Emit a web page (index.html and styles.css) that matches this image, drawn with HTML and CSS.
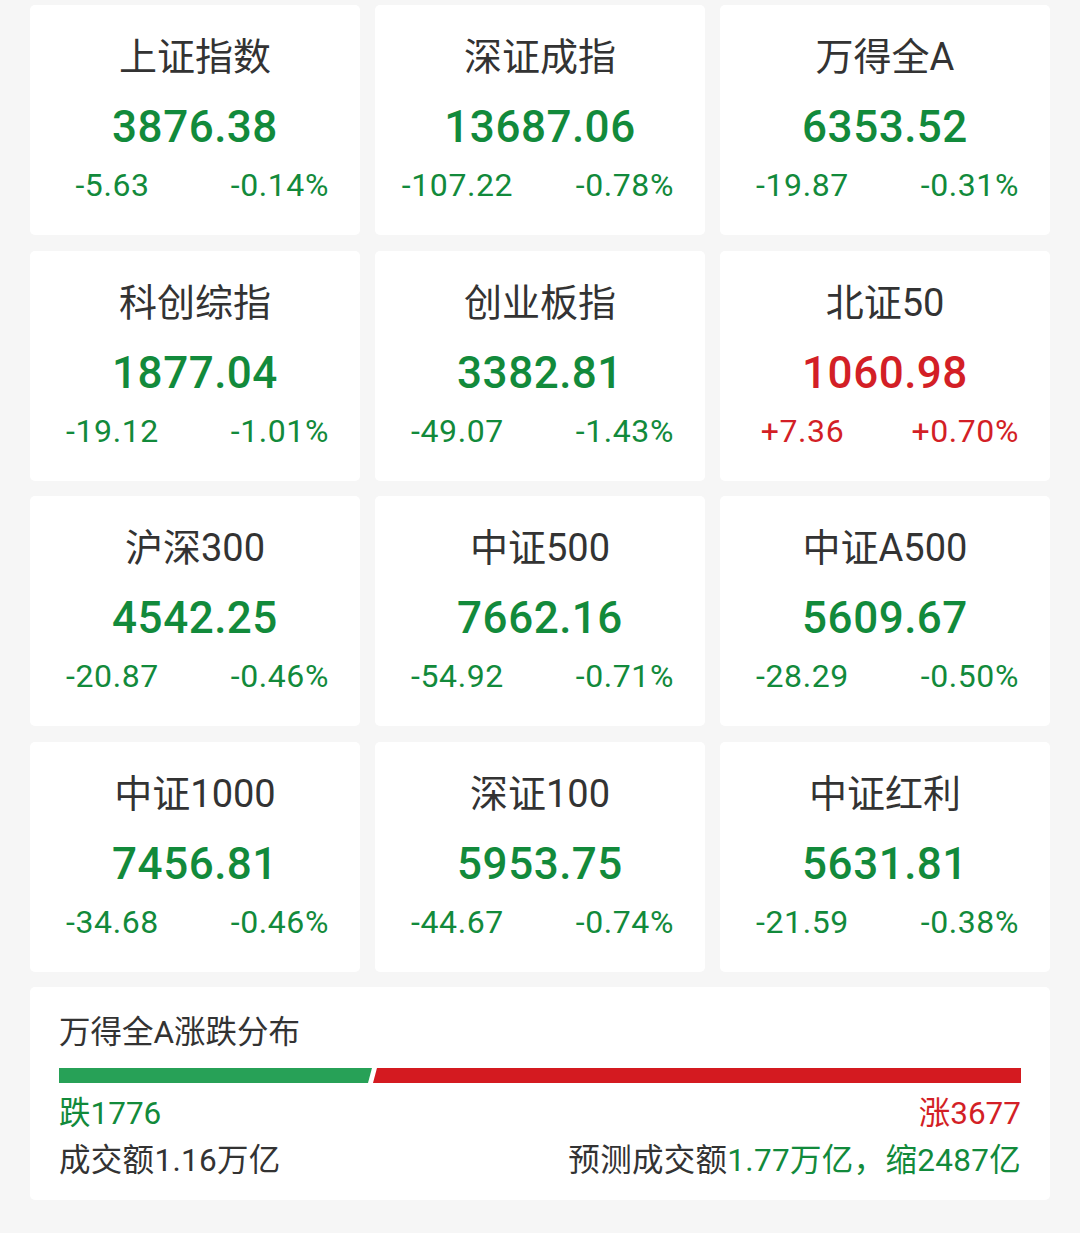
FILE: index.html
```html
<!DOCTYPE html>
<html lang="zh">
<head>
    <meta charset="UTF-8">
    <meta name="viewport" content="width=device-width, initial-scale=1.0">
    <title>指数行情</title>
    <link rel="stylesheet" href="styles.css">
</head>
<body>
    <div class="page">
        <div class="index-grid">
            <div class="card">
                <div class="name">上证指数</div>
                <div class="price down">3876.38</div>
                <div class="chg down"><span class="chg-val">-5.63</span><span class="chg-pct">-0.14%</span></div>
            </div>
            <div class="card">
                <div class="name">深证成指</div>
                <div class="price down">13687.06</div>
                <div class="chg down"><span class="chg-val">-107.22</span><span class="chg-pct">-0.78%</span></div>
            </div>
            <div class="card">
                <div class="name">万得全A</div>
                <div class="price down">6353.52</div>
                <div class="chg down"><span class="chg-val">-19.87</span><span class="chg-pct">-0.31%</span></div>
            </div>

            <div class="card">
                <div class="name">科创综指</div>
                <div class="price down">1877.04</div>
                <div class="chg down"><span class="chg-val">-19.12</span><span class="chg-pct">-1.01%</span></div>
            </div>
            <div class="card">
                <div class="name">创业板指</div>
                <div class="price down">3382.81</div>
                <div class="chg down"><span class="chg-val">-49.07</span><span class="chg-pct">-1.43%</span></div>
            </div>
            <div class="card">
                <div class="name">北证50</div>
                <div class="price up">1060.98</div>
                <div class="chg up"><span class="chg-val">+7.36</span><span class="chg-pct">+0.70%</span></div>
            </div>

            <div class="card">
                <div class="name">沪深300</div>
                <div class="price down">4542.25</div>
                <div class="chg down"><span class="chg-val">-20.87</span><span class="chg-pct">-0.46%</span></div>
            </div>
            <div class="card">
                <div class="name">中证500</div>
                <div class="price down">7662.16</div>
                <div class="chg down"><span class="chg-val">-54.92</span><span class="chg-pct">-0.71%</span></div>
            </div>
            <div class="card">
                <div class="name">中证A500</div>
                <div class="price down">5609.67</div>
                <div class="chg down"><span class="chg-val">-28.29</span><span class="chg-pct">-0.50%</span></div>
            </div>

            <div class="card">
                <div class="name">中证1000</div>
                <div class="price down">7456.81</div>
                <div class="chg down"><span class="chg-val">-34.68</span><span class="chg-pct">-0.46%</span></div>
            </div>
            <div class="card">
                <div class="name">深证100</div>
                <div class="price down">5953.75</div>
                <div class="chg down"><span class="chg-val">-44.67</span><span class="chg-pct">-0.74%</span></div>
            </div>
            <div class="card">
                <div class="name">中证红利</div>
                <div class="price down">5631.81</div>
                <div class="chg down"><span class="chg-val">-21.59</span><span class="chg-pct">-0.38%</span></div>
            </div>
        </div>

        <!-- 涨跌分布 -->
        <div class="dist-card">
            <div class="dist-title">万得全A涨跌分布</div>
            <div class="dist-bar">
                <div class="bar-fall" style="flex: 1776"></div>
                <div class="bar-rise" style="flex: 3677"></div>
            </div>
            <div class="dist-row">
                <span class="down">跌1776</span>
                <span class="up">涨3677</span>
            </div>
            <div class="dist-row amount">
                <span>成交额1.16万亿</span>
                <span>预测成交额<span class="down">1.77万亿，缩2487亿</span></span>
            </div>
        </div>
    </div>
</body>
</html>
```

FILE: styles.css
```css
body {
    margin: 0;
    background: #f6f6f6;
    font-family: Roboto, 'Noto Sans CJK SC', sans-serif;
    color: #333;
}

.page {
    padding: 5px 30px 30px;
}

.index-grid {
    display: grid;
    grid-template-columns: repeat(3, 330px);
    column-gap: 15px;
    row-gap: 15.5px;
}

.card {
    background: white;
    border-radius: 5px;
    height: 230px;
    box-sizing: border-box;
    padding-top: 29px;
    display: flex;
    flex-direction: column;
}

.name {
    font-size: 38px;
    line-height: 46px;
    text-align: center;
    color: #333;
}

.price {
    margin-top: 22px;
    font-size: 44px;
    line-height: 50px;
    font-weight: 500;
    letter-spacing: 0.5px;
    text-align: center;
}

.chg {
    margin-top: 13px;
    display: grid;
    grid-template-columns: 1fr 1fr;
    font-size: 32px;
    line-height: 40px;
    letter-spacing: 0.6px;
}

.chg-val {
    text-align: center;
}

.chg-pct {
    text-align: right;
    padding-right: 31px;
}

.down {
    color: #128a3b;
}

.up {
    color: #d31f26;
}

/* 涨跌分布卡片 */
.dist-card {
    margin-top: 15.5px;
    background: white;
    border-radius: 5px;
    padding: 26px 29px 19px 29px;
}

.dist-title {
    font-size: 31.5px;
    line-height: 40px;
}

.dist-bar {
    margin-top: 15px;
    height: 15px;
    display: flex;
    gap: 1px;
}

.bar-fall {
    background: #27a157;
    clip-path: polygon(0 0, 100% 0, calc(100% - 4px) 100%, 0 100%);
}

.bar-rise {
    background: #d41a20;
    clip-path: polygon(4px 0, 100% 0, 100% 100%, 0 100%);
}

.dist-row {
    margin-top: 11px;
    display: flex;
    justify-content: space-between;
    font-size: 31.5px;
    line-height: 40px;
}

.dist-row.amount {
    margin-top: 7px;
    letter-spacing: 0.3px;
}
```
